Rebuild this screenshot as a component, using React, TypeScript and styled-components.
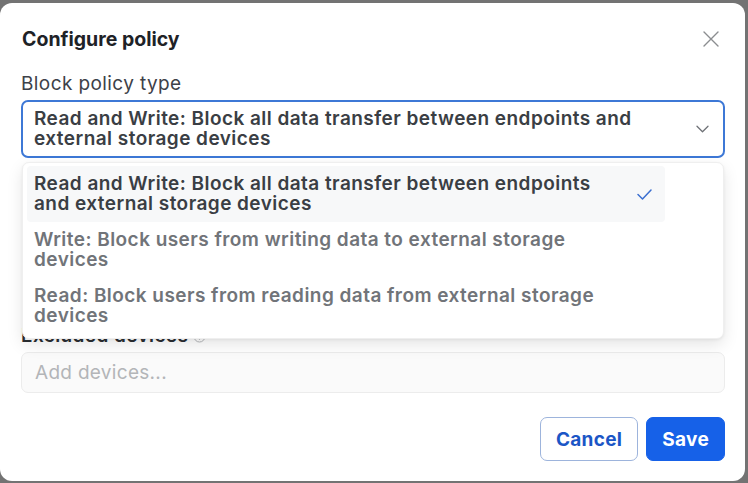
import React, { ReactNode } from "react";
import styled, { createGlobalStyle } from "styled-components";

const GlobalStyle = createGlobalStyle`
	html, body {
		margin: 0;
		padding: 0;
		height: 100%;
	}
	body {
		background: #737373;
		font-family: Inter, "Noto Sans", "Liberation Sans", sans-serif;
		overflow: hidden;
	}
`;

const Backdrop = styled.div`
	width: 748px;
	height: 483px;
	display: flex;
	align-items: flex-start;
`;

const Modal = styled.div`
	margin: 3px 0 0 0;
	width: 745px;
	height: 478px;
	box-sizing: border-box;
	background: #fff;
	border-radius: 12px;
	padding: 24px 20px 20px 21px;
	display: flex;
	flex-direction: column;
`;

const Header = styled.div`
	display: flex;
	align-items: center;
	justify-content: space-between;
	height: 24px;
`;

const Title = styled.h2`
	margin: 0 0 0 1px;
	font-size: 19.5px;
	font-weight: 700;
	line-height: 24px;
	color: #1e2227;
`;

const CloseButton = styled.button`
	border: none;
	background: transparent;
	padding: 0;
	margin-right: 5px;
	width: 18px;
	height: 18px;
	display: flex;
	align-items: center;
	justify-content: center;
	color: #8b8d90;
	cursor: pointer;
`;

const Body = styled.div`
	margin-top: 22px;
	display: flex;
	flex-direction: column;
	gap: 24px;
`;

const Field = styled.div`
	position: relative;
	display: flex;
	flex-direction: column;
	gap: 5px;
`;

const Label = styled.label<{ strong?: boolean }>`
	font-size: 19px;
	letter-spacing: 0.4px;
	line-height: 22px;
	font-weight: ${(p) => (p.strong ? 600 : 400)};
	color: ${(p) => (p.strong ? "#2a2e33" : "#3d4148")};
	display: flex;
	align-items: center;
	gap: 5px;
`;

const SelectBox = styled.div`
	box-sizing: border-box;
	border: 2px solid #3d78d6;
	border-radius: 7px;
	padding: 8px 14px 8px 11px;
	display: flex;
	align-items: center;
	gap: 20px;
	height: 58px;
`;

const SelectText = styled.div`
	flex: 1;
	font-size: 19px;
	letter-spacing: 0.45px;
	font-weight: 600;
	line-height: 20px;
	color: #3a3e44;
`;

const Menu = styled.div`
	position: absolute;
	top: calc(100% + 4px);
	left: 1px;
	right: 1px;
	z-index: 10;
	background: #fff;
	border: 1px solid #efefef;
	border-radius: 7px;
	box-shadow: 0 6px 16px rgba(0, 0, 0, 0.1), 0 1px 3px rgba(0, 0, 0, 0.06);
	padding: 3px 58px 4px 4px;
`;

const Option = styled.div<{ selected?: boolean }>`
	display: flex;
	align-items: center;
	gap: 22px;
	min-height: 56px;
	box-sizing: border-box;
	padding: 8px 13px 8px 7px;
	border-radius: 4px;
	background: ${(p) => (p.selected ? "#f7f8f9" : "transparent")};
	color: ${(p) => (p.selected ? "#3a3e44" : "#717479")};
	font-size: 19px;
	letter-spacing: 0.45px;
	font-weight: 600;
	line-height: 20px;
`;

const OptionText = styled.span`
	flex: 1;
`;

const CheckSlot = styled.span`
	width: 15px;
	display: flex;
	color: #3b6fd0;
`;

const ScopeSection = styled.div`
	height: 119px;
`;

const Input = styled.div`
	box-sizing: border-box;
	height: 41px;
	border: 1px solid #ececec;
	border-radius: 7px;
	background: #fafafa;
	padding: 0 13px;
	display: flex;
	align-items: center;
	font-size: 19px;
	letter-spacing: 0.3px;
	color: #b3b5b8;
`;

const Footer = styled.div`
	margin-top: auto;
	display: flex;
	justify-content: flex-end;
	gap: 8px;
`;

const Button = styled.button<{ primary?: boolean }>`
	height: 44px;
	box-sizing: border-box;
	padding: 0 15px;
	border-radius: 7px;
	font-family: inherit;
	font-size: 19px;
	letter-spacing: 0.3px;
	font-weight: 700;
	cursor: pointer;
	border: 1px solid ${(p) => (p.primary ? "#1661e8" : "#9db4dc")};
	background: ${(p) => (p.primary ? "#1661e8" : "#fff")};
	color: ${(p) => (p.primary ? "#fff" : "#1b56c6")};
`;

const options = [
	"Read and Write: Block all data transfer between endpoints and external storage devices",
	"Write: Block users from writing data to external storage devices",
	"Read: Block users from reading data from external storage devices",
];

const Check: React.FC = () => (
	<svg width="15" height="11" viewBox="0 0 15 11" fill="none">
		<path d="M1 5.5l4.5 4.5L14 1" stroke="currentColor" strokeWidth="1.5" strokeLinecap="round" strokeLinejoin="round" />
	</svg>
);

const InfoIcon: ReactNode = (
	<svg width="13" height="13" viewBox="0 0 13 13" fill="none">
		<circle cx="6.5" cy="6.5" r="5.5" stroke="#b6b8bb" strokeWidth="1" />
		<path d="M6.5 6v3.2M6.5 4v.1" stroke="#b6b8bb" strokeWidth="1.2" strokeLinecap="round" />
	</svg>
);

const App: React.FC = () => {
	const selected = 0;
	return (
		<>
			<GlobalStyle />
			<Backdrop>
				<Modal>
					<Header>
						<Title>Configure policy</Title>
						<CloseButton aria-label="Close">
							<svg width="16" height="16" viewBox="0 0 16 16" fill="none">
								<path d="M1 1l14 14M15 1L1 15" stroke="currentColor" strokeWidth="1.4" strokeLinecap="round" />
							</svg>
						</CloseButton>
					</Header>
					<Body>
						<Field>
							<Label>Block policy type</Label>
							<SelectBox>
								<SelectText>{options[selected]}</SelectText>
								<svg width="13" height="8" viewBox="0 0 13 8" fill="none">
									<path d="M1 1.2l5.5 5.5L12 1.2" stroke="#6f7277" strokeWidth="1.3" strokeLinecap="round" strokeLinejoin="round" />
								</svg>
							</SelectBox>
							<Menu>
								{options.map((o, i) => (
									<Option key={o} selected={i === selected}>
										<OptionText>{o}</OptionText>
										<CheckSlot>{i === selected && <Check />}</CheckSlot>
									</Option>
								))}
							</Menu>
						</Field>
						<ScopeSection />
						<Field>
							<Label strong>Excluded devices {InfoIcon}</Label>
							<Input>Add devices...</Input>
						</Field>
					</Body>
					<Footer>
						<Button>Cancel</Button>
						<Button primary>Save</Button>
					</Footer>
				</Modal>
			</Backdrop>
		</>
	);
};

export default App;
